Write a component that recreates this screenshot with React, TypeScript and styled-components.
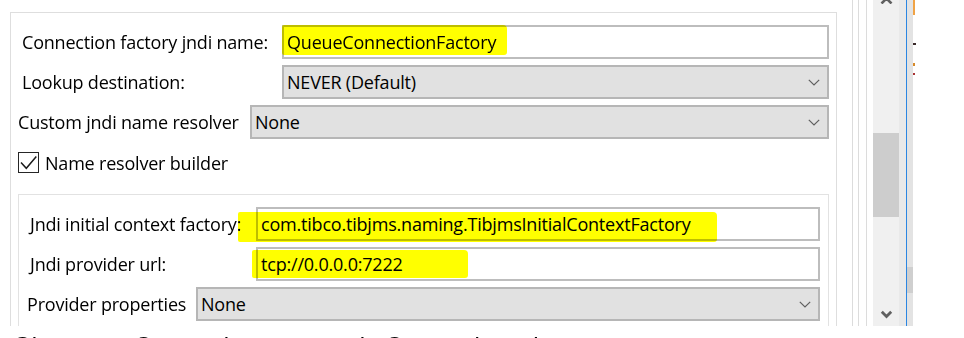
import React from "react";
import styled, { createGlobalStyle } from "styled-components";

interface FieldRowProps {
  $labelWidth: number;
  $mt?: number;
  $pl?: number;
}

interface MarkerProps {
  $left: number;
  $top: number;
  $width: number;
  $height: number;
}

interface SpacerProps {
  $h: number;
}

interface SashLineProps {
  $ml: number;
}

interface GlyphBitProps {
  $top: number;
  $w: number;
  $h: number;
  $color: string;
}

const GlobalStyle = createGlobalStyle`
  html, body {
    margin: 0;
    padding: 0;
    background: #fff;
  }
  body {
    width: 964px;
    height: 338px;
    overflow: hidden;
  }
`;

const Window = styled.div`
  display: flex;
  height: 326px;
  overflow: hidden;
  font-family: "Open Sans", "Noto Sans", sans-serif;
  font-size: 18px;
  letter-spacing: -0.2px;
  color: #000;
`;

const MainPane = styled.div`
  flex: none;
  width: 852px;
  box-sizing: border-box;
  padding: 12px 15px 0 10px;
`;

const GroupBox = styled.div`
  height: 100%;
  box-sizing: border-box;
  border: 1px solid #dedede;
  border-bottom: none;
  padding: 12px 7px 0 7px;
`;

const InnerGroup = styled.div`
  margin-top: 21px;
  height: 200px;
  box-sizing: border-box;
  border: 1px solid #e2e2e2;
  border-bottom: none;
  padding: 12px 8px 0 8px;
`;

const FieldRow = styled.div<FieldRowProps>`
  display: grid;
  grid-template-columns: ${(p) => p.$labelWidth}px 1fr;
  align-items: center;
  margin-top: ${(p) => (p.$mt ? `${p.$mt}px` : 0)};
  padding-left: ${(p) => (p.$pl ? `${p.$pl}px` : 0)};
`;

const Label = styled.span`
  white-space: nowrap;
`;

const TextBox = styled.div`
  position: relative;
  height: 34px;
  box-sizing: border-box;
  border: 2px solid #bdbdbd;
  background: #fff;
  display: flex;
  align-items: center;
  justify-content: space-between;
  padding: 0 7px 0 3px;
  white-space: nowrap;
`;

const ComboBox = styled(TextBox)`
  background: #e1e1e1;
  border-color: #b6b6b6;
`;

const Marker = styled.span<MarkerProps>`
  position: absolute;
  left: ${(p) => p.$left}px;
  top: ${(p) => p.$top}px;
  width: ${(p) => p.$width}px;
  height: ${(p) => p.$height}px;
  background: #ffff00;
  border-radius: 2px 4px 3px 2px;
  mix-blend-mode: multiply;
  pointer-events: none;
`;

const CheckRow = styled.label`
  display: flex;
  align-items: center;
  gap: 6px;
  margin-top: 13px;
  height: 21px;
`;

const SashLine = styled.div<SashLineProps>`
  flex: none;
  width: 1px;
  margin-left: ${(p) => p.$ml}px;
  background: #dcdcdc;
`;

const Sash = styled.div`
  flex: none;
  width: 21px;
  display: flex;
`;

const ScrollTrack = styled.div`
  flex: none;
  width: 26px;
  background: #f0f0f0;
  display: flex;
  flex-direction: column;
  align-items: center;
`;

const Spacer = styled.div<SpacerProps>`
  flex: none;
  height: ${(p) => p.$h}px;
`;

const Thumb = styled.div`
  align-self: stretch;
  height: 84px;
  background: #cdcdcd;
`;

const Grow = styled.div`
  flex: 1;
`;

const ScrollEdge = styled.div`
  flex: none;
  width: 7px;
  background: #e9e9e9;
`;

const FocusLine = styled.div`
  flex: none;
  width: 1px;
  background: #2b86e2;
`;

const NeighborBar = styled.div`
  flex: none;
  width: 6px;
  background: #e3e3e3;
  display: flex;
  flex-direction: column;
`;

const NeighborThumb = styled.div`
  height: 26px;
  background: #cfcfcf;
`;

const RightPane = styled.div`
  flex: 1;
  position: relative;
  background: #fff;
`;

const GlyphBit = styled.span<GlyphBitProps>`
  position: absolute;
  left: 0;
  top: ${(p) => p.$top}px;
  width: ${(p) => p.$w}px;
  height: ${(p) => p.$h}px;
  background: ${(p) => p.$color};
`;

const Caption = styled.p`
  margin: 6px 0 0 13px;
  font-family: "Liberation Sans", Arial, sans-serif;
  font-size: 24px;
  line-height: 28px;
  color: #000;
  white-space: nowrap;
`;

const Chevron = () => (
  <svg width="12" height="7" viewBox="0 0 12 7">
    <polyline
      points="0.8,0.8 6,6 11.2,0.8"
      fill="none"
      stroke="#5f5f5f"
      strokeWidth="1.2"
    />
  </svg>
);

const Checkbox = () => (
  <svg width="21" height="21" viewBox="0 0 21 21">
    <rect x="0.5" y="0.5" width="20" height="20" fill="#fff" stroke="#262626" />
    <polyline
      points="3,10.5 8.3,16.3 18.3,4.6"
      fill="none"
      stroke="#1c1c1c"
      strokeWidth="1.5"
    />
  </svg>
);

const Combo = ({ value }: { value: string }) => (
  <ComboBox>
    <span>{value}</span>
    <Chevron />
  </ComboBox>
);

const App = () => {
  return (
    <>
      <GlobalStyle />
      <Window>
        <MainPane>
          <GroupBox>
            <FieldRow $labelWidth={260} $pl={4}>
              <Label>Connection factory jndi name:</Label>
              <TextBox>
                <span>QueueConnectionFactory</span>
                <Marker $left={-2} $top={-2} $width={225} $height={30} />
              </TextBox>
            </FieldRow>
            <FieldRow $labelWidth={260} $pl={4} $mt={6}>
              <Label>Lookup destination:</Label>
              <Combo value="NEVER (Default)" />
            </FieldRow>
            <FieldRow $labelWidth={232} $mt={6}>
              <Label>Custom jndi name resolver</Label>
              <Combo value="None" />
            </FieldRow>
            <CheckRow>
              <Checkbox />
              <span>Name resolver builder</span>
            </CheckRow>
            <InnerGroup>
              <FieldRow $labelWidth={226} $pl={3}>
                <Label>Jndi initial context factory:</Label>
                <TextBox>
                  <span>com.tibco.tibjms.naming.TibjmsInitialContextFactory</span>
                  <Marker $left={-20} $top={3} $width={479} $height={30} />
                </TextBox>
              </FieldRow>
              <FieldRow $labelWidth={226} $pl={3} $mt={6}>
                <Label>Jndi provider url:</Label>
                <TextBox>
                  <span>tcp://0.0.0.0:7222</span>
                  <Marker $left={-6} $top={1} $width={216} $height={28} />
                </TextBox>
              </FieldRow>
              <FieldRow $labelWidth={169} $mt={6}>
                <Label>Provider properties</Label>
                <Combo value="None" />
              </FieldRow>
            </InnerGroup>
          </GroupBox>
        </MainPane>
        <Sash>
          <SashLine $ml={0} />
          <SashLine $ml={5} />
          <SashLine $ml={7} />
        </Sash>
        <ScrollTrack>
          <svg width="13" height="4" viewBox="0 4 13 4">
            <polyline
              points="1.5,7.5 6.5,2.5 11.5,7.5"
              fill="none"
              stroke="#606060"
              strokeWidth="2.6"
            />
          </svg>
          <Spacer $h={129} />
          <Thumb />
          <Grow />
          <svg width="13" height="9" viewBox="0 0 13 9">
            <polyline
              points="1.8,1.8 6.5,6.5 11.2,1.8"
              fill="none"
              stroke="#606060"
              strokeWidth="2.8"
            />
          </svg>
          <Spacer $h={7} />
        </ScrollTrack>
        <ScrollEdge />
        <FocusLine />
        <NeighborBar>
          <Spacer $h={267} />
          <NeighborThumb />
        </NeighborBar>
        <RightPane>
          <GlyphBit $top={0} $w={2} $h={15} $color="#f0a345" />
          <GlyphBit $top={43} $w={3} $h={2} $color="#3a2a2a" />
          <GlyphBit $top={63} $w={2} $h={3} $color="#d78a2a" />
          <GlyphBit $top={73} $w={2} $h={2} $color="#a83232" />
        </RightPane>
      </Window>
      <Caption>Give some Connection, must us in Connection tab</Caption>
    </>
  );
};

export default App;
